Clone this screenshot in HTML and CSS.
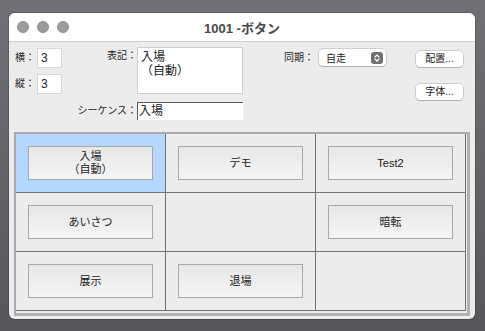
FILE: index.html
```html
<!DOCTYPE html>
<html lang="ja">
<head>
    <meta charset="UTF-8">
    <title>1001 -ボタン</title>
    <link rel="stylesheet" href="styles.css">
</head>
<body>
    <div class="window">
        <div class="titlebar">
            <div class="lights"><span></span><span></span><span></span></div>
            <div class="title">1001 -ボタン</div>
            <div></div>
        </div>

        <div class="form">
            <!-- grid size -->
            <div class="dims">
                <div class="field"><label>横：</label><div class="num">3</div></div>
                <div class="field"><label>縦：</label><div class="num">3</div></div>
            </div>

            <!-- label / sequence -->
            <div class="notation">
                <div class="row top">
                    <label class="wide">表記：</label>
                    <div class="textarea">入場<br>（自動）</div>
                </div>
                <div class="row seq-row">
                    <label class="wide">シーケンス：</label>
                    <div class="seq">入場</div>
                </div>
            </div>

            <div class="sync">
                <label>同期：</label>
                <div class="popup">
                    <span>自走</span>
                    <svg width="12" height="12" viewBox="0 0 12 12">
                        <rect width="12" height="12" rx="3" fill="#707070"/>
                        <path d="M4 5 L6 3 L8 5 M4 7 L6 9 L8 7" fill="none" stroke="#fff" stroke-width="1.2" stroke-linecap="round" stroke-linejoin="round"/>
                    </svg>
                </div>
            </div>

            <div class="side">
                <button>配置...</button>
                <button>字体...</button>
            </div>
        </div>

        <div class="frame">
            <div class="grid">
                <div class="cell selected"><button>入場<br>（自動）</button></div>
                <div class="cell"><button>デモ</button></div>
                <div class="cell"><button>Test2</button></div>
                <div class="cell"><button>あいさつ</button></div>
                <div class="cell"></div>
                <div class="cell"><button>暗転</button></div>
                <div class="cell"><button>展示</button></div>
                <div class="cell"><button>退場</button></div>
                <div class="cell"></div>
            </div>
        </div>
    </div>
</body>
</html>
```

FILE: styles.css
```css
* {
    box-sizing: border-box;
}

body {
    margin: 0;
    width: 485px;
    height: 331px;
    overflow: hidden;
    background: linear-gradient(#707176, #56575b);
    font-family: "Liberation Sans", "Noto Sans CJK JP", sans-serif;
    color: #222;
}

.window {
    margin: 13px 0 0 9px;
    width: 466px;
    height: 306px;
    background: #ececec;
    border-radius: 6px;
    overflow: hidden;
    box-shadow: 0 0 0 1px rgba(0, 0, 0, 0.15);
}

/* title bar */
.titlebar {
    height: 29px;
    background: #fff;
    border-bottom: 1px solid #cfcfcf;
    display: grid;
    grid-template-columns: 1fr auto 1fr;
    align-items: center;
}

.lights {
    display: flex;
    gap: 8px;
    padding-left: 8px;
}

.lights span {
    width: 12px;
    height: 12px;
    border-radius: 50%;
    background: #9c9c9c;
    border: 1px solid #8e8e8e;
}

.title {
    font-size: 13px;
    font-weight: bold;
    color: #474747;
}

/* form area */
.form {
    height: 90px;
    display: flex;
    align-items: flex-start;
    padding-left: 6px;
}

label {
    font-size: 10px;
    line-height: 14px;
    color: #262626;
}

.dims {
    width: 47px;
    margin-top: 6px;
    display: flex;
    flex-direction: column;
    gap: 6px;
}

.field {
    display: flex;
    align-items: center;
}

.field label {
    width: 22px;
}

.num {
    width: 25px;
    height: 20px;
    background: #fff;
    border: 1px solid #d8d8d8;
    font-size: 12px;
    line-height: 18px;
    padding-left: 3px;
}

.notation {
    margin-top: 5px;
}

.notation .row {
    display: flex;
    align-items: center;
}

.notation .row.top {
    align-items: flex-start;
}

.notation .seq-row {
    margin-top: 8px;
}

label.wide {
    width: 75px;
    text-align: right;
}

.row.top label {
    padding-top: 2px;
}

.textarea {
    width: 106px;
    height: 47px;
    background: #fff;
    border: 1px solid #cdcdcd;
    font-size: 12px;
    line-height: 13.5px;
    padding: 3px;
}

.seq {
    width: 106px;
    height: 18px;
    background: #fff;
    border-top: 1px solid #5a5a5a;
    border-left: 1px solid #5a5a5a;
    font-size: 12px;
    line-height: 16px;
    padding-left: 1px;
}

.sync {
    margin-left: 41px;
    margin-top: 7px;
    display: flex;
    align-items: center;
    gap: 5px;
}

.popup {
    width: 67px;
    height: 17px;
    background: #fff;
    border-radius: 4px;
    box-shadow: 0 0 0 0.5px rgba(0, 0, 0, 0.25), 0 1px 1px rgba(0, 0, 0, 0.15);
    display: flex;
    align-items: center;
    justify-content: space-between;
    padding: 0 3px 0 7px;
    font-size: 10px;
}

.popup svg {
    display: block;
}

.side {
    margin-left: 30px;
    margin-top: 9px;
    display: flex;
    flex-direction: column;
    gap: 17px;
}

.side button {
    width: 47px;
    height: 16px;
    padding: 0;
    border: none;
    border-radius: 4px;
    background: #fff;
    box-shadow: 0 0 0 0.5px rgba(0, 0, 0, 0.25), 0 1px 1px rgba(0, 0, 0, 0.15);
    font-family: inherit;
    font-size: 10px;
    line-height: 14px;
    color: #222;
}

/* button grid */
.frame {
    margin-left: 5px;
    width: 456px;
    border-style: solid;
    border-color: #a9a9a9 #b0b0b0 #b0b0b0 #a9a9a9;
    border-width: 2px 3px 3px 2px;
    padding: 0 1px 2px 0;
}

.grid {
    display: grid;
    grid-template-columns: repeat(3, 150px);
    grid-template-rows: repeat(3, 59px);
}

.cell {
    border-right: 1px solid #717171;
    border-bottom: 1px solid #717171;
    padding: 12px 0 0 12px;
}

.cell.selected {
    background: #b3d7ff;
}

.cell button {
    display: block;
    width: 125px;
    height: 34px;
    padding: 0;
    border: 1px solid #a8a8a8;
    background: linear-gradient(#e7e7e7, #f5f5f5);
    font-family: inherit;
    font-size: 11px;
    line-height: 13px;
    color: #222;
}
```
